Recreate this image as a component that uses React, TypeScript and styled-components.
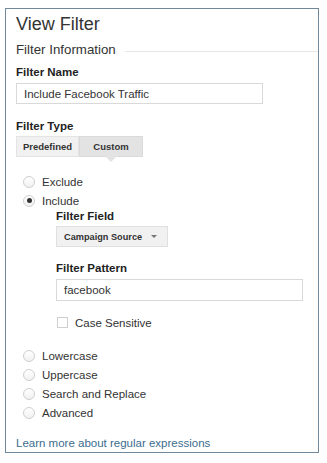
import React from "react";
import styled, { createGlobalStyle } from "styled-components";

const Global = createGlobalStyle`
  html, body { margin: 0; padding: 0; background: #ffffff; }
  body { font-family: "Liberation Sans", Arial, sans-serif; color: #333; }
  * { box-sizing: border-box; }
`;

const Frame = styled.div`
  margin: 8px 0 0 5px;
  width: 314px;
  height: 445px;
  border: 1px solid #71889a;
  padding: 4px 0 0 10px;
  display: flex;
  flex-direction: column;
  align-items: flex-start;
`;

const Title = styled.h1`
  margin: 0;
  font-size: 18px;
  line-height: 22px;
  font-weight: normal;
  color: #333;
`;

const SectionHeader = styled.div`
  margin-top: 7px;
  align-self: stretch;
  display: flex;
  align-items: center;
  gap: 9px;
  font-size: 13.3px;
  line-height: 16px;
  color: #333;
  &::after {
    content: "";
    flex: 1;
    height: 1px;
    margin-top: 3px;
    background: #e6e6e6;
  }
`;

const Label = styled.div<{ $top: number }>`
  margin-top: ${(p) => p.$top}px;
  font-size: 11.5px;
  line-height: 14px;
  font-weight: bold;
  color: #222;
`;

const TextBox = styled.div<{ $width: number; $height: number }>`
  margin-top: 4px;
  width: ${(p) => p.$width}px;
  height: ${(p) => p.$height}px;
  border: 1px solid #d9d9d9;
  padding-left: 7px;
  display: flex;
  align-items: center;
  font-size: 11.5px;
  color: #333;
`;

const Tabs = styled.div`
  margin-top: 3px;
  display: flex;
`;

const Tab = styled.div<{ $active?: boolean; $width: number }>`
  position: relative;
  width: ${(p) => p.$width}px;
  height: 21px;
  display: flex;
  align-items: center;
  justify-content: center;
  font-size: 9.5px;
  font-weight: bold;
  color: #333;
  background: ${(p) => (p.$active ? "#e3e3e3" : "#f1f1f1")};
  border: 1px solid ${(p) => (p.$active ? "#dadada" : "#e4e4e4")};
  ${(p) =>
    p.$active &&
    `
    &::after {
      content: "";
      position: absolute;
      left: 50%;
      top: 100%;
      margin-left: -6px;
      border-left: 6px solid transparent;
      border-right: 6px solid transparent;
      border-top: 6px solid #e3e3e3;
    }
  `}
`;

const Options = styled.div<{ $top: number }>`
  margin-top: ${(p) => p.$top}px;
  padding-left: 7px;
  display: flex;
  flex-direction: column;
`;

const OptionRow = styled.div`
  height: 19px;
  display: flex;
  align-items: center;
  gap: 7px;
  font-size: 11.5px;
  color: #333;
`;

const Radio = styled.span<{ $checked?: boolean }>`
  width: 12px;
  height: 12px;
  border-radius: 50%;
  border: 1px solid #cfcfcf;
  background: linear-gradient(#ffffff, #f1f1f1);
  display: flex;
  align-items: center;
  justify-content: center;
  &::after {
    content: "";
    display: ${(p) => (p.$checked ? "block" : "none")};
    width: 5px;
    height: 5px;
    border-radius: 50%;
    background: #333;
  }
`;

const SubBlock = styled.div`
  margin-left: 33px;
  margin-top: -1px;
  display: flex;
  flex-direction: column;
  align-items: flex-start;
`;

const Select = styled.div`
  margin-top: 3px;
  width: 112px;
  height: 21px;
  border: 1px solid #e0e0e0;
  background: #f1f1f1;
  padding: 0 10px 0 7px;
  display: flex;
  align-items: center;
  justify-content: space-between;
  font-size: 9.2px;
  font-weight: bold;
  color: #333;
  &::after {
    content: "";
    border-left: 3px solid transparent;
    border-right: 3px solid transparent;
    border-top: 3px solid #777;
  }
`;

const CheckRow = styled.div`
  margin-top: 12px;
  height: 19px;
  padding-left: 1px;
  display: flex;
  align-items: center;
  gap: 7px;
  font-size: 11.5px;
  color: #333;
`;

const Checkbox = styled.span`
  width: 11px;
  height: 11px;
  border: 1px solid #cfcfcf;
  background: #fff;
`;

const Link = styled.a`
  margin-top: 14px;
  font-size: 11.5px;
  line-height: 14px;
  color: #3c6d8e;
  text-decoration: none;
`;

export default function App() {
  return (
    <>
      <Global />
      <Frame>
        <Title>View Filter</Title>
        <SectionHeader>Filter Information</SectionHeader>
        <Label $top={7}>Filter Name</Label>
        <TextBox $width={247} $height={21}>Include Facebook Traffic</TextBox>
        <Label $top={15}>Filter Type</Label>
        <Tabs>
          <Tab $width={63}>Predefined</Tab>
          <Tab $width={64} $active>
            Custom
          </Tab>
        </Tabs>
        <Options $top={15}>
          <OptionRow>
            <Radio />
            Exclude
          </OptionRow>
          <OptionRow>
            <Radio $checked />
            Include
          </OptionRow>
          <SubBlock>
            <Label $top={0}>Filter Field</Label>
            <Select>Campaign Source</Select>
            <Label $top={14}>Filter Pattern</Label>
            <TextBox $width={247} $height={22}>facebook</TextBox>
            <CheckRow>
              <Checkbox />
              Case Sensitive
            </CheckRow>
          </SubBlock>
        </Options>
        <Options $top={14}>
          <OptionRow>
            <Radio />
            Lowercase
          </OptionRow>
          <OptionRow>
            <Radio />
            Uppercase
          </OptionRow>
          <OptionRow>
            <Radio />
            Search and Replace
          </OptionRow>
          <OptionRow>
            <Radio />
            Advanced
          </OptionRow>
        </Options>
        <Link href="#">Learn more about regular expressions</Link>
      </Frame>
    </>
  );
}
